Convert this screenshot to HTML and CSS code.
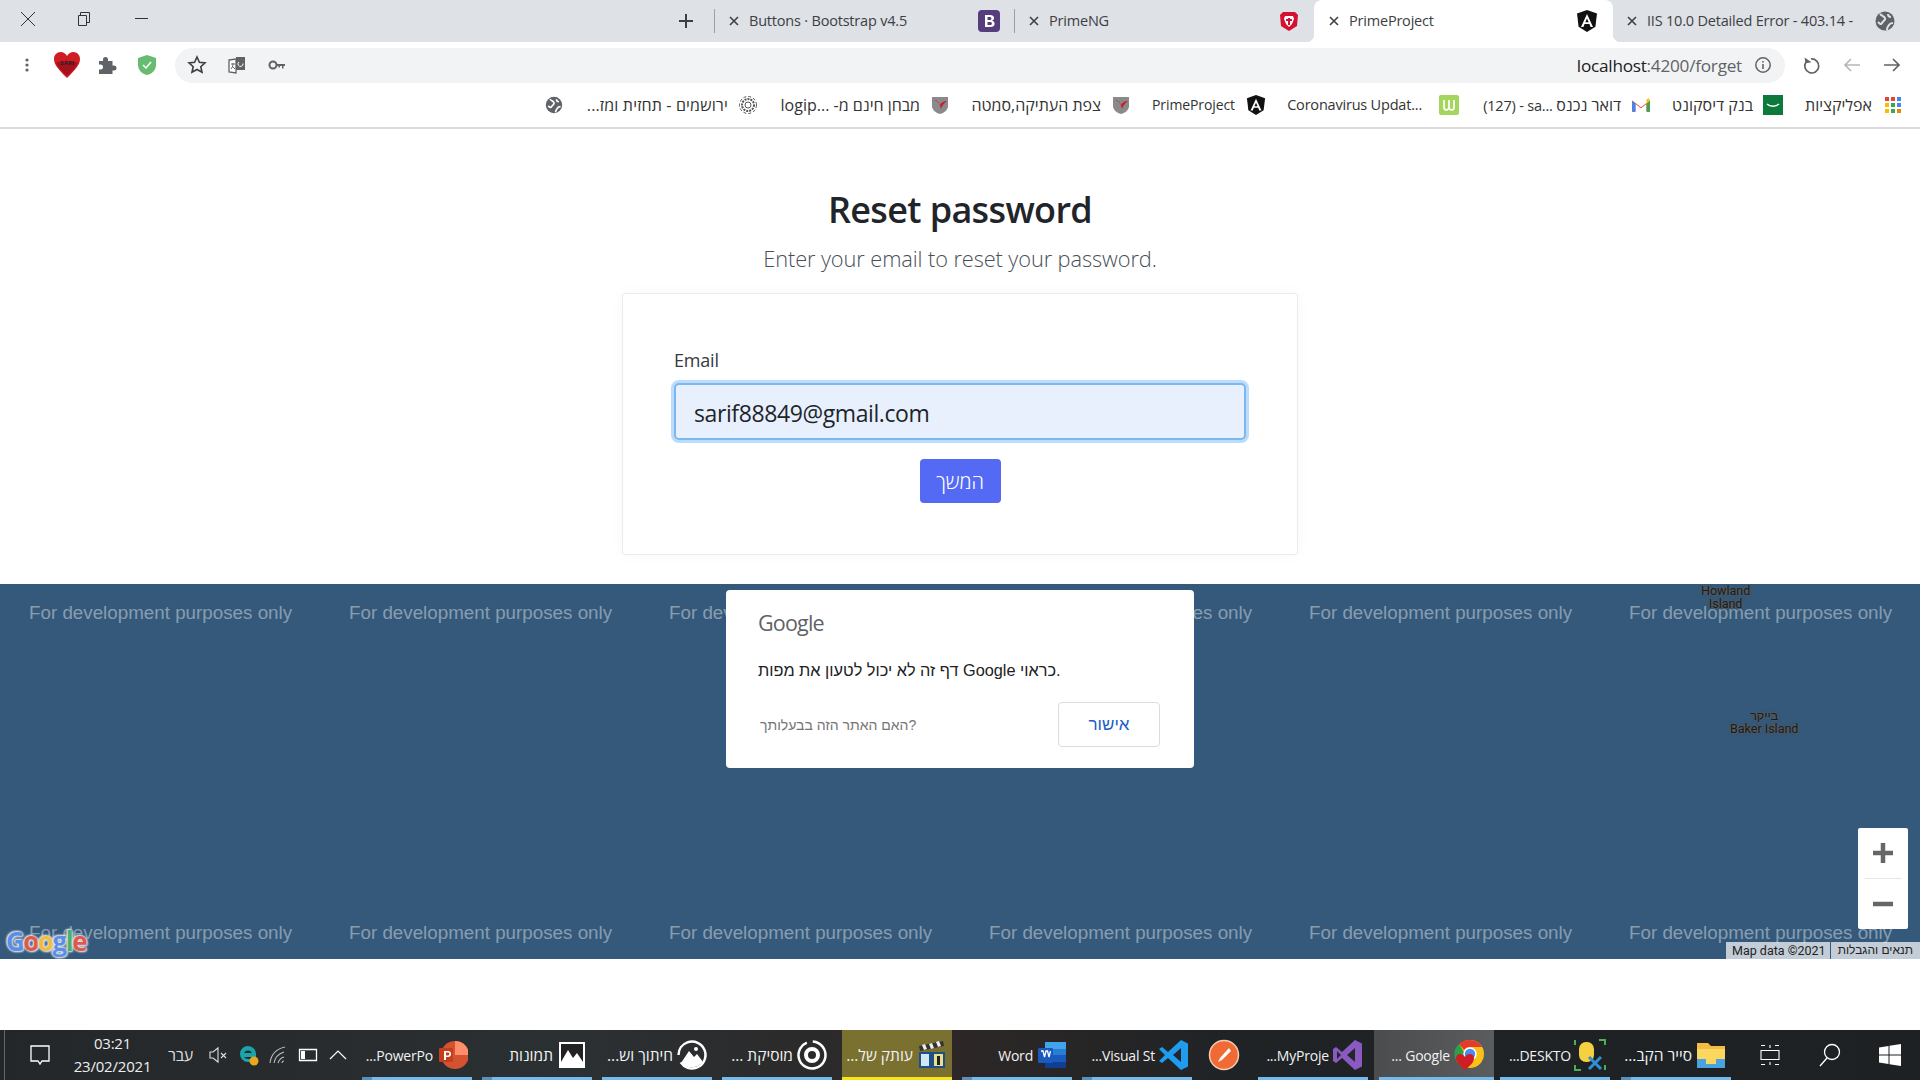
FILE: index.html
```html
<!DOCTYPE html>
<html lang="en">
<head>
<meta charset="utf-8">
<title>PrimeProject</title>
<link rel="stylesheet" href="styles.css">
</head>
<body>
<header class="tabstrip">
  <div class="winbtn"><svg class="i16" viewBox="0 0 16 16"><path d="M1 1l14 14M15 1L1 15" stroke="#333" fill="none"/></svg></div>
  <div class="winbtn"><svg class="i16" viewBox="0 0 16 16"><path d="M2.500 4.500h8v10h-8zM4.500 4.500v-3h9v10h-3" stroke="#333" fill="none"/></svg></div>
  <div class="winbtn winmin"><svg class="i16" viewBox="0 0 16 16"><path d="M1 7.500h13" stroke="#333" fill="none"/></svg></div>
  <div class="newtab"><svg class="i16" viewBox="0 0 16 16"><path d="M8 1v14M1 8h14" stroke="#3c4043" stroke-width="2" fill="none"/></svg></div>
  <div class="tab sep">
    <svg class="close" viewBox="0 0 10 10"><path d="M1 1l8 8M9 1L1 9" stroke="#3c4043" stroke-width="1.600"/></svg>
    <span class="tabtext">Buttons · Bootstrap v4.5</span>
    <svg class="fav" viewBox="0 0 22 22"><rect width="22" height="22" rx="4" fill="#563d7c"/><path d="M7 5h5c2.500 0 4 1.200 4 3 0 1.300-.8 2.300-2 2.700 1.600.3 2.600 1.400 2.600 3 0 2.100-1.600 3.300-4.200 3.300H7zM9.500 7v3h2c1.200 0 1.900-.5 1.900-1.500S12.700 7 11.500 7zm0 5v3h2.300c1.300 0 2.100-.5 2.100-1.500s-.8-1.500-2.100-1.500z" fill="#fff" fill-rule="evenodd"/></svg>
  </div>
  <div class="tab sep">
    <svg class="close" viewBox="0 0 10 10"><path d="M1 1l8 8M9 1L1 9" stroke="#3c4043" stroke-width="1.600"/></svg>
    <span class="tabtext">PrimeNG</span>
    <svg class="fav" viewBox="0 0 22 22"><path d="M5 2h12l3 3-1 11-8 5-8-5L2 5z" fill="#d4122f"/><path d="M7 6h8l1 3-2 5-3 3-3-3-2-5z" fill="#fff"/><path d="M10 8h2v7h-2zM8 9h6v2H8z" fill="#d4122f"/></svg>
  </div>
  <div class="tab active">
    <svg class="close" viewBox="0 0 10 10"><path d="M1 1l8 8M9 1L1 9" stroke="#3c4043" stroke-width="1.600"/></svg>
    <span class="tabtext">PrimeProject</span>
    <svg class="fav" viewBox="0 0 22 22"><path d="M11 0l10 3.600-1.600 13.200L11 22l-8.400-5.200L1 3.600z" fill="#111"/><path d="M11 4L5 17h2.400l1.200-3h4.800l1.200 3H17zm0 4.500l1.700 3.800H9.300z" fill="#fff" fill-rule="evenodd"/></svg>
  </div>
  <div class="tab tab-last">
    <svg class="close" viewBox="0 0 10 10"><path d="M1 1l8 8M9 1L1 9" stroke="#3c4043" stroke-width="1.600"/></svg>
    <span class="tabtext">IIS 10.0 Detailed Error - 403.14 -</span>
    <svg class="fav" viewBox="0 0 22 22"><circle cx="11" cy="11" r="9.500" fill="#5f6368"/><path d="M6 4c2 2 4 2 5 4s-2 3-3 5-2 1-4-1M13 20c0-3 1-3 2-5s3-2 4-2M14 4c0 2 1 3 3 3" stroke="#dee1e6" stroke-width="2" fill="none"/></svg>
  </div>
</header>

<nav class="toolbar">
  <div class="toolicon"><svg class="i16" viewBox="0 0 16 16"><g fill="#5f6368"><circle cx="8" cy="3" r="1.600"/><circle cx="8" cy="8" r="1.600"/><circle cx="8" cy="13" r="1.600"/></g></svg></div>
  <div class="toolicon"><svg class="i28" viewBox="0 0 28 28"><path d="M14 27C6 19 1 14 1 8c0-4 3-7 6.500-7C10.500 1 13 3 14 5c1-2 3.500-4 6.500-4C24 1 27 4 27 8c0 6-5 11-13 19z" fill="#d01c24"/><path d="M3 12c3-2 7 0 10-3 3 3 8 1 12 3-3 5-7 9-11 13C9 21 5 16 3 12z" fill="#a5121c"/><text x="14" y="14" class="hearttext">SARI</text></svg></div>
  <div class="toolicon"><svg class="i20" viewBox="0 0 20 20"><path d="M2 6h4V4.500a2.500 2.500 0 015 0V6h4.500v4.500H17a2.500 2.500 0 010 5h-1.500V19H2v-4.500h1.500a2.500 2.500 0 000-5H2z" fill="#5f6368"/></svg></div>
  <div class="toolicon"><svg class="i22" viewBox="0 0 22 22"><path d="M11 1l9 3v7c0 5-4 9-9 10-5-1-9-5-9-10V4z" fill="#68bc71"/><path d="M7 11l3 3 5-6" stroke="#fff" stroke-width="1.500" fill="none"/></svg></div>
  <div class="omnibox">
    <div class="omni-left">
      <svg class="i20" viewBox="0 0 20 20"><path d="M10 2l2.400 5.300 5.600.6-4.200 3.800 1.200 5.600L10 14.500l-5 2.800 1.200-5.600L2 7.900l5.600-.6z" fill="none" stroke="#3c4043" stroke-width="1.600"/></svg>
      <svg class="i20" viewBox="0 0 20 20"><path d="M2 5l7-1v14l-7-1z" fill="#fff" stroke="#5f6368" stroke-width="1.300"/><path d="M9 2h9v13H9z" fill="#5f6368"/><path d="M12 7a2.500 2.500 0 104 1.500" stroke="#fff" fill="none"/><path d="M4 9h4M6 8v1c0 2-1 4-2 5M5 11l3 3" stroke="#5f6368" fill="none"/></svg>
      <svg class="i20" viewBox="0 0 20 20"><circle cx="6" cy="10" r="3.500" fill="none" stroke="#5f6368" stroke-width="2"/><path d="M9 9h9v2h-1.500v2.500H15V11h-2v1.500h-1.500V11H9z" fill="#5f6368"/></svg>
    </div>
    <div class="omni-right">
      <span class="url"><b>localhost</b>:4200/forget</span>
      <svg class="i18" viewBox="0 0 18 18"><circle cx="9" cy="9" r="7.200" fill="none" stroke="#5f6368" stroke-width="1.500"/><path d="M8.200 8h1.600v5H8.200zM8.200 5h1.600v1.600H8.200z" fill="#5f6368"/></svg>
    </div>
  </div>
  <div class="navbtn"><svg class="i20" viewBox="0 0 20 20"><path d="M8 3a7 7 0 11-5 3" fill="none" stroke="#5f6368" stroke-width="1.700" transform="translate(1 1)"/><path d="M3 2v6h6z" fill="#5f6368" transform="rotate(-10 5 5)"/></svg></div>
  <div class="navbtn"><svg class="i20" viewBox="0 0 20 20"><path d="M18 10H3M9 4l-6 6 6 6" fill="none" stroke="#b4b7bb" stroke-width="1.700"/></svg></div>
  <div class="navbtn"><svg class="i20" viewBox="0 0 20 20"><path d="M2 10h15M11 4l6 6-6 6" fill="none" stroke="#5f6368" stroke-width="1.700"/></svg></div>
</nav>

<nav class="bookmarks" dir="rtl">
  <div class="bm he w118"><svg class="i16" viewBox="0 0 16 16"><g><rect width="4" height="4" fill="#e94335"/><rect x="6" width="4" height="4" fill="#e94335"/><rect x="12" width="4" height="4" fill="#4285f4"/><rect y="6" width="4" height="4" fill="#fbbc04"/><rect x="6" y="6" width="4" height="4" fill="#34a853"/><rect x="12" y="6" width="4" height="4" fill="#4285f4"/><rect y="12" width="4" height="4" fill="#fbbc04"/><rect x="6" y="12" width="4" height="4" fill="#34a853"/><rect x="12" y="12" width="4" height="4" fill="#ea8600"/></g></svg><span>אפליקציות</span></div>
  <div class="bm he w132"><svg class="i20" viewBox="0 0 20 20"><rect width="20" height="20" fill="#0b7a3b"/><path d="M4 9c3 3 9 3 12 0" stroke="#fff" stroke-width="1.500" fill="none"/></svg><span>בנק דיסקונט</span></div>
  <div class="bm w192"><svg class="i20" viewBox="0 0 18 18"><path d="M1 15V5l8 6 8-6v10h-3V8l-5 4-5-4v7z" fill="#ea4335"/><path d="M1 15h3V8L1 5z" fill="#4285f4"/><path d="M14 15h3V5l-3 3z" fill="#34a853"/><path d="M14 8l3-3-1-2-2 1z" fill="#fbbc04"/></svg><span class="mail" dir="ltr">(127) - sa... <span class="he">דואר נכנס</span></span></div>
  <div class="bm w193"><svg class="i20" viewBox="0 0 20 20"><rect width="20" height="20" rx="2" fill="#a4d65e"/><path d="M5 5v7c0 4 4.500 4 5 0 .5 4 5 4 5 0V5M10 5v7" stroke="#fff" stroke-width="1.700" fill="none"/></svg><span class="wide" dir="ltr">Coronavirus Updat...</span></div>
  <div class="bm w135"><svg class="i20" viewBox="0 0 22 22"><path d="M11 0l10 3.600-1.600 13.200L11 22l-8.400-5.200L1 3.600z" fill="#111"/><path d="M11 4L5 17h2.400l1.200-3h4.800l1.200 3H17zm0 4.500l1.700 3.800H9.300z" fill="#fff" fill-rule="evenodd"/></svg><span class="prime">PrimeProject</span></div>
  <div class="bm he w181"><svg class="i20" viewBox="0 0 20 20"><path d="M2 2h16v9c0 4-4 7-8 8-4-1-8-4-8-8z" fill="#8a8a8a"/><path d="M4 5c3 0 5 2 6 5 1-2 3-4 7-4-3 2-5 5-6 8C10 9 8 6 4 5z" fill="#c8202f"/></svg><span>צפת העתיקה,סמטה</span></div>
  <div class="bm he w192"><svg class="i20" viewBox="0 0 20 20"><path d="M2 2h16v9c0 4-4 7-8 8-4-1-8-4-8-8z" fill="#8a8a8a"/><path d="M4 5c3 0 5 2 6 5 1-2 3-4 7-4-3 2-5 5-6 8C10 9 8 6 4 5z" fill="#c8202f"/></svg><span>מבחן חינם מ- ...logip</span></div>
  <div class="bm he w195"><svg class="i20" viewBox="0 0 20 20"><circle cx="10" cy="10" r="6" fill="none" stroke="#555" stroke-width="2" stroke-dasharray="2 1"/><circle cx="10" cy="10" r="8.500" fill="none" stroke="#555" stroke-width="1" stroke-dasharray="3 2"/><circle cx="10" cy="10" r="3" fill="none" stroke="#555"/></svg><span class="gear">ירושמים - תחזית ומז...</span></div>
  <div class="bm"><svg class="i18" viewBox="0 0 22 22"><circle cx="11" cy="11" r="10" fill="#5f6368"/><path d="M6 4c2 2 4 2 5 4s-2 3-3 5-2 1-4-1M13 20c0-3 1-3 2-5s3-2 4-2M14 4c0 2 1 3 3 3" stroke="#fff" stroke-width="2" fill="none"/></svg></div>
</nav>

<main class="page">
  <section class="auth">
    <h1 class="title">Reset password</h1>
    <p class="subtitle">Enter your email to reset your password.</p>
    <form class="card">
      <label class="label" for="email">Email</label>
      <input class="field" id="email" type="text" value="sarif88849@gmail.com" readonly>
      <button class="submit" type="button">המשך</button>
    </form>
  </section>
  <section class="map">
    <div class="watermark">
      <div class="wm-row"><span>For development purposes only</span><span>For development purposes only</span><span>For development purposes only</span><span>For development purposes only</span><span>For development purposes only</span><span>For development purposes only</span></div>
      <div class="wm-row"><span>For development purposes only</span><span>For development purposes only</span><span>For development purposes only</span><span>For development purposes only</span><span>For development purposes only</span><span>For development purposes only</span></div>
    </div>
    <div class="place howland">Howland<br>Island</div>
    <div class="place baker">בייקר<br>Baker Island</div>
    <div class="maplogo"><i class="b">G</i><i class="r">o</i><i class="y">o</i><i class="b">g</i><i class="g">l</i><i class="r">e</i></div>
    <div class="dialog">
      <div class="dlg-logo">Google</div>
      <p class="dlg-msg" dir="ltr">דף זה לא יכול לטעון את מפות Google כראוי.</p>
      <div class="dlg-foot">
        <span class="dlg-own" dir="ltr">האם האתר הזה בבעלותך?</span>
        <button class="dlg-ok" type="button">אישור</button>
      </div>
    </div>
    <div class="zoomctl">
      <div class="zoombtn"><svg class="i24" viewBox="0 0 24 24"><path d="M12 2v20M2 12h20" stroke="#666" stroke-width="4.500"/></svg></div>
      <div class="zoomline"></div>
      <div class="zoombtn"><svg class="i24" viewBox="0 0 24 24"><path d="M2 12h20" stroke="#666" stroke-width="4.500"/></svg></div>
    </div>
    <div class="attrib"><span>Map data ©2021</span><span class="attr-terms">תנאים והגבלות</span></div>
  </section>
</main>

<footer class="taskbar">
  <div class="tray">
    <div class="t-notif"><svg class="i24" viewBox="0 0 24 24"><path d="M3 3h18v15h-7l-2 3-2-3H3z" fill="none" stroke="#fff" stroke-width="1.300"/></svg></div>
    <div class="t-clock"><span>03:21</span><span>23/02/2021</span></div>
    <div class="t-lang">עבר</div>
    <div class="t-ic"><svg class="i20" viewBox="0 0 20 20"><path d="M2 7h3l5-4v14l-5-4H2zM13 8l5 5M18 8l-5 5" fill="none" stroke="#ddd" stroke-width="1.100"/></svg></div>
    <div class="t-ic"><svg class="i22" viewBox="0 0 22 22"><path d="M11 2a8 8 0 100 16h6v-3h-6a5 5 0 01-4-2h12v-2a8 8 0 00-8-9zM7 9a4.500 4.500 0 018 0z" fill="#1aa5ac" fill-rule="evenodd"/><circle cx="17" cy="17" r="4.500" fill="#eaa81c"/></svg></div>
    <div class="t-ic"><svg class="i20" viewBox="0 0 20 20"><path d="M2 18C3 10 8 4 17 2M6 18c1-6 4-9 10-11M10 18c1-3 2-5 6-6M14 18c0-1 1-2 2-2" fill="none" stroke="#bbb" stroke-width="1.100"/></svg></div>
    <div class="t-ic"><svg class="i20" viewBox="0 0 20 20"><path d="M1.500 4.500h17v11h-17z" fill="none" stroke="#fff" stroke-width="1.300"/><path d="M3 6h4v8H3z" fill="#fff"/></svg></div>
    <div class="t-ic"><svg class="i20" viewBox="0 0 20 20"><path d="M2 14l8-8 8 8" fill="none" stroke="#fff" stroke-width="1.200"/></svg></div>
  </div>
  <div class="app multi"><span dir="rtl">PowerPo...</span><svg class="i32" viewBox="0 0 32 32"><circle cx="19" cy="16" r="14" fill="#d35230"/><path d="M19 2a14 14 0 0114 14H19z" fill="#ff8f6b"/><rect x="3" y="9" width="14" height="14" rx="1" fill="#c43e1c"/><path d="M8 12h4a2.500 2.500 0 010 6h-2v3H8zm2 1.600v2.800h2a1.400 1.400 0 000-2.800z" fill="#fff" fill-rule="evenodd"/></svg></div>
  <div class="app multi"><span class="he" dir="rtl">תמונות</span><svg class="i32" viewBox="0 0 32 32"><path d="M3 3h26v26H3z" fill="#fff"/><path d="M5 5h22v18l-6-9-4 5-5-8-7 12z" fill="#222"/></svg></div>
  <div class="app"><span class="he" dir="rtl">חיתוך וש...</span><svg class="i32" viewBox="0 0 32 32"><circle cx="16" cy="16" r="13.500" fill="none" stroke="#fff" stroke-width="2.500" stroke-dasharray="60 8" transform="rotate(-110 16 16)"/><path d="M5 24l8-12 5 6 3-3 6 8c-6 7-17 7-22 1z" fill="#fff"/><circle cx="20" cy="10" r="2" fill="#fff"/></svg></div>
  <div class="app"><span class="he" dir="rtl">מוסיקת ...</span><svg class="i32" viewBox="0 0 32 32"><circle cx="16" cy="16" r="13.500" fill="none" stroke="#fff" stroke-width="2.500" stroke-dasharray="72 6" transform="rotate(-60 16 16)"/><circle cx="16" cy="16" r="6" fill="none" stroke="#fff" stroke-width="4"/></svg></div>
  <div class="app app-olive"><span class="he" dir="rtl">עותק של...</span><svg class="i32" viewBox="0 0 32 32"><path d="M3 7l24-5 1 5-24 5z" fill="#333"/><path d="M6 6l3-1 2 5-3 1zM13 5l3-1 2 5-3 1zM20 3l3-1 2 5-3 1z" fill="#eee"/><path d="M3 13h26v16H3z" fill="#1e4f86"/><path d="M5 15h8v12H5z" fill="#cfe6f7"/><path d="M18 15h9v12h-9z" fill="#e8e08a"/><path d="M21 17h3v9h-3z" fill="#222"/></svg></div>
  <div class="app multi"><span dir="rtl">Word</span><svg class="i32" viewBox="0 0 32 32"><path d="M9 3h21v26H9z" fill="#2b7cd3"/><path d="M9 3h21v7H9z" fill="#41a5ee"/><path d="M9 16h21v7H9z" fill="#185abd"/><path d="M9 23h21v6H9z" fill="#103f91"/><rect x="2" y="9" width="15" height="15" rx="1" fill="#185abd"/><path d="M5 12h2l1.500 6 1.500-6h1.500l1.500 6 1.500-6" stroke="#fff" stroke-width="1.300" fill="none"/></svg></div>
  <div class="app multi app-code"><span dir="rtl">Visual St...</span><svg class="i32" viewBox="0 0 32 32"><path d="M23 1l7 3.500v23L23 31 10 19l-6 5-3-2 6-6-6-6 3-2 6 5z" fill="#1f9cf0"/><path d="M23 9l-8 7 8 7z" fill="#23272b"/></svg></div>
  <div class="app app-narrow"><svg class="i32" viewBox="0 0 32 32"><ellipse cx="16" cy="16" rx="14.500" ry="14.500" fill="#f06a35" stroke="#f4cdb5" stroke-width="1.500"/><path d="M21 9L12 19l-2 4 4-2 9-9z" fill="#fff"/></svg></div>
  <div class="app app-before-grey"><span dir="rtl">MyProje...</span><svg class="i32" viewBox="0 0 32 32"><path d="M23 1l7 3.500v23L23 31 10 19l-6 5-3-2V10l3-2 6 5z" fill="#8a5ac2"/><path d="M23 9l-8 7 8 7zM5 12v8l4-4z" fill="#23272b"/></svg></div>
  <div class="app app-grey"><span dir="rtl">Google ...</span><svg class="i32" viewBox="0 0 32 32"><circle cx="17" cy="15" r="14" fill="#fbc116"/><path d="M17 1a14 14 0 0112 7H17a7 7 0 00-6 3L6 5a14 14 0 0111-4z" fill="#e33b2e"/><path d="M6 5l6 10 5 8-4 6A14 14 0 016 5z" fill="#2aa24a"/><circle cx="17" cy="15" r="6" fill="#4a8af4" stroke="#fff" stroke-width="1.500"/><path d="M12 31C6 26 3 23 3 19c0-2.500 2-4 4-4 2 0 4 1 5 3 1-2 3-3 5-3 2 0 4 1.500 4 4 0 4-3 7-9 12z" fill="#d01c24"/></svg></div>
  <div class="app app-wide"><span dir="rtl">DESKTO...</span><svg class="i32" viewBox="0 0 32 32"><path d="M1 26v5h6M31 6V1h-6M1 6V1M31 26v5" stroke="#4caf50" stroke-width="2" fill="none"/><rect x="5" y="3" width="15" height="20" rx="7" fill="#f5d142"/><path d="M15 18l12 12M27 18L15 30" stroke="#2f8fd8" stroke-width="3"/></svg></div>
  <div class="app multi app-last"><span class="he" dir="rtl">סייר הקב...</span><svg class="i32" viewBox="0 0 32 32"><path d="M2 4h11l3 3h14v22H2z" fill="#f3bd42"/><path d="M2 10h28v19H2z" fill="#fbd75f"/><path d="M2 20h28v9H2z" fill="#4aa3df"/><path d="M11 20h10v5H11z" fill="#fbd75f"/></svg></div>
  <div class="sysbtn"><svg class="i24" viewBox="0 0 24 24"><path d="M3 2.500h4M3 21.500h4M17 2.500h4M17 21.500h4M3 7.500h18v9H3zM12 2v3M12 19v3" fill="none" stroke="#fff" stroke-width="1.100"/></svg></div>
  <div class="sysbtn"><svg class="i24" viewBox="0 0 24 24"><circle cx="14" cy="9" r="7.500" fill="none" stroke="#fff" stroke-width="1.300"/><path d="M9 15l-7 8" stroke="#fff" stroke-width="1.300"/></svg></div>
  <div class="sysbtn"><svg class="i24" viewBox="0 0 24 24"><path d="M1 4.500l9.500-1.500v8.500H1zM11.500 2.800L23 1v10.500H11.500zM1 12.500h9.500V21L1 19.500zM11.500 12.500H23V23l-11.500-1.800z" fill="#fff"/></svg></div>
</footer>
</body>
</html>
```

FILE: styles.css
```css
* { box-sizing: border-box; }
html, body { margin: 0; height: 100%; }
body {
  width: 1920px;
  height: 1080px;
  overflow: hidden;
  display: flex;
  flex-direction: column;
  background: #fff;
  font-family: "Open Sans", "Liberation Sans", sans-serif;
  color: #212529;
}
svg { display: block; flex: none; }
.i16 { width: 16px; height: 16px; }
.i18 { width: 18px; height: 18px; }
.i20 { width: 20px; height: 20px; }
.i22 { width: 22px; height: 22px; }
.i24 { width: 24px; height: 24px; }
.i28 { width: 28px; height: 28px; }
.i32 { width: 32px; height: 32px; }
.he { font-size: 16px; letter-spacing: 0; }

/* tab strip */
.tabstrip { flex: none; height: 42px; background: #dee1e6; display: flex; align-items: center; padding-right: 7px; }
.winbtn { width: 56px; height: 37px; align-self: flex-start; display: flex; align-items: center; justify-content: center; }
.winmin { padding-left: 3px; }
.newtab { margin-left: auto; margin-right: 5px; width: 46px; height: 42px; display: flex; align-items: center; justify-content: center; }
.tab { position: relative; flex: none; width: 300px; height: 42px; display: flex; align-items: center; padding: 0 14px 0 15px; font-size: 14.500px; line-height: 40px; color: #3c4043; letter-spacing: -.2px; }
.tab.sep::before { content: ""; position: absolute; left: 0; top: 9px; width: 1px; height: 24px; background: #9aa0a6; }
.tab.active { background: #fff; border-radius: 8px 8px 0 0; width: 299px; padding-right: 15px; }
.tab.active::before, .tab.active::after { content: ""; position: absolute; bottom: 0; width: 8px; height: 8px; }
.tab.active::before { left: -8px; background: radial-gradient(circle at 0 0, transparent 8px, #fff 8.500px); }
.tab.active::after { right: -8px; background: radial-gradient(circle at 100% 0, transparent 8px, #fff 8.500px); }
.tab-last { padding-right: 17px; padding-left: 14px; }
.close { width: 10px; height: 10px; margin-right: 10px; flex: none; }
.tabtext { flex: 1; white-space: nowrap; min-width: 0; }
.fav { width: 22px; height: 22px; }

/* toolbar */
.toolbar { flex: none; height: 42px; display: flex; align-items: center; padding: 4px 8px 0 7px; background: #fff; }
.toolicon { width: 40px; height: 36px; display: flex; align-items: center; justify-content: center; }
.hearttext { font: 700 6px "Liberation Sans", sans-serif; text-anchor: middle; fill: #222; }
.omnibox { flex: 1; margin-left: 8px; height: 35px; background: #f1f3f4; border-radius: 18px; display: flex; align-items: center; justify-content: space-between; padding: 0 13px 0 12px; }
.omni-left, .omni-right { display: flex; align-items: center; }
.omni-left { gap: 20px; }
.omni-right { gap: 12px; }
.url { font-size: 17.200px; color: #5f6368; letter-spacing: -.25px; }
.url b { font-weight: 400; color: #202124; }
.navbtn { width: 40px; height: 36px; display: flex; align-items: center; justify-content: center; }
.omnibox + .navbtn { margin-left: 7px; }

/* bookmarks */
.bookmarks { flex: none; height: 45px; border-bottom: 2px solid #dcdcdc; display: flex; align-items: center; padding: 0 19px 2px 0; background: #fff; }
.bm { flex: none; display: flex; align-items: center; gap: 10px; font-size: 14px; color: #333; white-space: nowrap; letter-spacing: -.2px; }
.bm.he { font-size: 16px; letter-spacing: 0; }
.wide { font-size: 14.500px; margin-right: 7px; }
.mail { font-size: 14.500px; }
.prime { margin-right: 1px; letter-spacing: -.1px; }
.gear { letter-spacing: .15px; }
.w118 { width: 118px; gap: 13px; }
.w132 { width: 132px; }
.w135 { width: 135px; }
.w181 { width: 181px; }
.w192 { width: 192px; }
.w193 { width: 193px; }
.w195 { width: 195px; }

/* page */
.page { flex: 1; display: flex; flex-direction: column; min-height: 0; }
.auth { flex: none; height: 455px; padding-top: 59px; display: flex; flex-direction: column; align-items: center; }
.title { margin: 0; font-size: 36px; line-height: 43px; font-weight: 600; letter-spacing: -.65px; color: #212529; }
.subtitle { margin: 11px 0 0; font-size: 21.800px; line-height: 33px; font-weight: 300; color: #495057; letter-spacing: -.1px; }
.card { margin-top: 18px; width: 676px; height: 262px; border: 1px solid #e9ecef; border-radius: 3px; background: #fff; box-shadow: 0 0 16px rgba(0,0,0,.03); padding: 54px 51px 0; display: flex; flex-direction: column; }
.label { font-size: 18px; line-height: 24px; color: #343a40; letter-spacing: -.2px; }
.field { margin-top: 11px; width: 100%; height: 57px; border: 2px solid #7db7ee; border-radius: 5px; box-shadow: 0 0 0 3px #bcdcfb; background: #e8f0fe; padding: 2px 18px 0; font: 400 23px "Open Sans", sans-serif; letter-spacing: -.4px; color: #212529; outline: none; }
.submit { margin: 19px auto 0; width: 81px; height: 44px; border: 0; border-radius: 4px; background: #5469f4; color: #fff; font: 300 20px "Open Sans", "Liberation Sans", sans-serif; }

/* map */
.map { flex: none; position: relative; height: 375px; background: #34597a; overflow: hidden; }
.watermark { position: absolute; inset: 0; padding: 17px 0 15px; display: flex; flex-direction: column; justify-content: space-between; }
.wm-row { display: flex; gap: 57px; padding-left: 29px; height: 23px; align-items: center; }
.wm-row span { flex: none; width: 263px; white-space: nowrap; font: 18.800px/23px "Liberation Sans", sans-serif; color: rgba(255,255,255,.42); }
.place { position: absolute; text-align: center; font: 12.500px/13px Roboto, "Liberation Sans", sans-serif; color: #1a1a1a; text-shadow: 0 0 2px #5c5c5c, 0 0 2px #5c5c5c, 0 0 3px #5c5c5c; white-space: nowrap; }
.howland { left: 1701px; top: 0; }
.baker { left: 1730px; top: 125px; }
.maplogo { position: absolute; left: 6px; top: 342px; font: 700 26px/30px "Open Sans", "Liberation Sans", sans-serif; letter-spacing: -1.500px; text-shadow: 0 0 2px #dfe3e6, 0 0 3px #dfe3e6, 1px 1px 2px #dfe3e6, -1px -1px 2px #dfe3e6; }
.maplogo i { font-style: normal; }
.maplogo .b { color: #5b8ee6; }
.maplogo .r { color: #e0574b; }
.maplogo .y { color: #f0bd3e; }
.maplogo .g { color: #4caf6a; }
.dialog { position: absolute; left: 726px; top: 6px; width: 468px; height: 178px; background: #fff; border-radius: 4px; padding: 18px 34px 0 32px; font-family: "Liberation Sans", sans-serif; }
.dlg-logo { font: 400 21.500px/30px "Open Sans", sans-serif; letter-spacing: -.8px; color: #5f6368; }
.dlg-msg { margin: 22px 0 0; font-size: 16.300px; line-height: 20px; color: #202124; white-space: nowrap; }
.dlg-foot { margin-top: 22px; display: flex; align-items: center; justify-content: space-between; }
.dlg-own { padding-left: 2px; font-size: 14px; color: #757575; }
.dlg-ok { width: 102px; height: 45px; background: #fff; border: 1px solid #dadce0; border-radius: 4px; font: 17px "Liberation Sans", sans-serif; color: #1a5fc8; }
.zoomctl { position: absolute; left: 1858px; top: 244px; width: 50px; height: 101px; background: #fff; border-radius: 2px; display: flex; flex-direction: column; align-items: center; }
.zoombtn { flex: 1; width: 100%; display: flex; align-items: center; justify-content: center; }
.zoomline { width: 37px; height: 1px; background: #e6e6e6; }
.attrib { position: absolute; right: 0; bottom: 0; height: 17px; width: 194px; background: rgba(255,255,255,.7); display: flex; align-items: center; justify-content: space-between; font: 12.500px/17px Roboto, "Liberation Sans", sans-serif; color: #222; padding-left: 6px; }
.attr-terms { height: 17px; border-left: 1px solid #34597a; padding: 0 7px; direction: rtl; white-space: nowrap; font-family: "Liberation Sans", sans-serif; font-size: 12px; }

/* taskbar */
.taskbar { flex: none; height: 50px; display: flex; color: #fff; background: linear-gradient(90deg, #24272a 0, #2b3033 30%, #2c2726 50%, #1f2326 65%, #1d2124 100%); font-size: 14px; letter-spacing: -.2px; }
.tray { flex: none; width: 362px; display: flex; align-items: center; padding-left: 5px; position: relative; }
.tray::before { content: ""; position: absolute; left: 4px; top: 0; bottom: 0; width: 1px; background: #666; }
.t-notif { width: 70px; display: flex; justify-content: center; }
.t-clock { width: 75px; display: flex; flex-direction: column; align-items: center; font-size: 15px; line-height: 23px; color: #eee; }
.t-lang { width: 53px; padding-left: 8px; text-align: center; font-size: 16px; color: #ddd; }
.t-ic { width: 30px; display: flex; justify-content: center; }
.app { flex: none; position: relative; width: 110px; height: 50px; margin-right: 10px; display: flex; align-items: center; justify-content: flex-end; gap: 3px; padding-right: 4px; white-space: nowrap; font-size: 14px; color: #f2f2f2; }
.app .he { font-size: 15.500px; }
.app::after { content: ""; position: absolute; left: 0; right: 0; bottom: 0; height: 3px; background: #76b9ed; }
.multi::before { content: ""; position: absolute; left: 0; bottom: 0; width: 10px; height: 3px; background: #5a90ba; z-index: 1; }
.app-code { padding-right: 2px; margin-right: 9px; }
.app-narrow { width: 47px; margin-right: 10px; padding-right: 8px; }
.app-narrow::after { display: none; }
.app-olive { background: #7a7030; }
.app-olive::after { background: #f5e61b; }
.app-before-grey { margin-right: 6px; }
.app-grey { width: 120px; margin-right: 6px; padding-right: 9px; background: linear-gradient(90deg, #4a4c4d, #5a5c5d); }
.app-grey::after { left: 5px; }
.app-wide { margin-right: 11px; }
.app-last { margin-right: 9px; }
.sysbtn { flex: none; width: 60px; height: 50px; display: flex; align-items: center; justify-content: center; }
```
